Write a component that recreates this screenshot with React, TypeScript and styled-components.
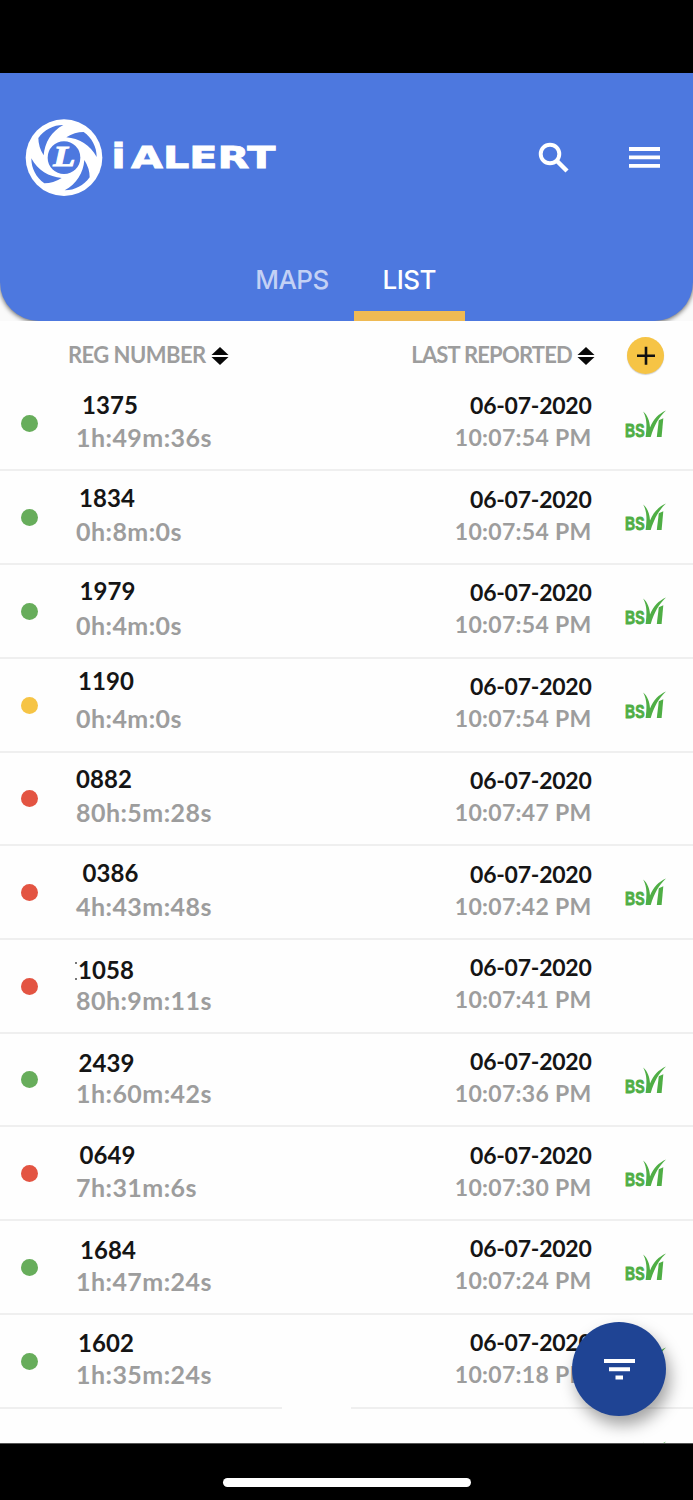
import React from 'react';
import styled, { createGlobalStyle } from 'styled-components';

const GlobalStyle = createGlobalStyle`
  body { margin: 0; background: #fefefe; }
  * { box-sizing: border-box; }
`;

const Screen = styled.div`
  position: relative;
  width: 693px;
  height: 1500px;
  overflow: hidden;
  display: flex;
  flex-direction: column;
  background: #fefefe;
  font-family: Lato, 'Liberation Sans', sans-serif;
`;

const StatusBar = styled.div`
  flex: none;
  height: 73px;
  background: #000;
`;

const HeaderWrap = styled.div`
  flex: none;
  height: 248px;
  background: #fafafa;
  overflow: hidden;
`;

const Header = styled.header`
  height: 248px;
  display: flex;
  flex-direction: column;
  justify-content: space-between;
  background: #4d78df;
  border-radius: 0 0 39px 39px;
  box-shadow: 0 1px 5px rgba(0, 0, 0, 0.65);
`;

const TopRow = styled.div`
  display: flex;
  align-items: center;
  height: 168px;
  padding: 2px 33px 0 22px;
`;

const Brand = styled.div`
  display: flex;
  align-items: center;
  flex: 1;
`;

const Actions = styled.div`
  display: flex;
  align-items: center;
  gap: 60px;
`;

const Tabs = styled.nav`
  display: flex;
  height: 80px;
  padding-left: 230px;
`;

const Tab = styled.div<{ $active?: boolean }>`
  width: ${p => (p.$active ? 110.5 : 124)}px;
  padding-top: 23px;
  text-align: center;
  font: 500 26px/32px Inter, sans-serif;
  letter-spacing: ${p => (p.$active ? '-0.5px' : '-0.5px')};
  color: ${p => (p.$active ? '#fff' : '#c3d1f5')};
  font-weight: ${p => (p.$active ? 500 : 450)};
  border-bottom: ${p => (p.$active ? '10px solid #efba54' : '0')};
`;

const ListHead = styled.div`
  flex: none;
  height: 56.7px;
  display: grid;
  grid-template-columns: 344px 251px 1fr;
  padding-top: 16px;
`;

const HeadCell = styled.div<{ $end?: boolean }>`
  display: flex;
  align-items: center;
  justify-content: ${p => (p.$end ? 'flex-end' : 'flex-start')};
  gap: 5px;
  height: 37px;
  padding-left: ${p => (p.$end ? 0 : 68)}px;
  font-size: 22px;
  letter-spacing: ${p => (p.$end ? '-0.8px' : '-0.55px')};
  font-weight: 700;
  color: #9d9d9d;
`;

const HeadLabel = styled.span`
  margin-top: -2px;
`;

const AddButton = styled.button`
  width: 37px;
  height: 37px;
  margin-left: 32px;
  padding: 0;
  border: 0;
  border-radius: 50%;
  background: #f6c445;
  box-shadow: 0 1px 1px rgba(0, 0, 0, 0.18);
`;

const List = styled.div`
  flex: 1;
  min-height: 0;
  overflow: hidden;
`;

const Row = styled.div<{ $broken?: boolean }>`
  height: 93.73px;
  display: grid;
  grid-template-columns: 76px 268px 247.5px 1fr;
  background: ${p =>
      p.$broken
        ? 'linear-gradient(90deg, #efefef 282px, transparent 282px, transparent 351px, #efefef 351px)'
        : 'linear-gradient(#efefef, #efefef)'}
    0 100% / 100% 2px no-repeat;
`;

const Dot = styled.span<{ $color: string }>`
  width: 17px;
  height: 17px;
  margin: 37.7px 0 0 21px;
  border-radius: 50%;
  background: ${p => p.$color};
`;

const Cell = styled.div<{ $end?: boolean }>`
  margin-top: ${p => (p.$end ? 11.3 : -1)}px;
  text-align: ${p => (p.$end ? 'right' : 'left')};
  font-weight: 700;
  font-size: 24px;
  line-height: 32px;
  white-space: nowrap;
`;

const Reg = styled.div<{ $x: number; $y: number }>`
  height: ${p => p.$y + 16}px;
  margin-bottom: ${p => 28.5 - p.$y}px;
  padding: ${p => p.$y - 16}px 0 0 ${p => p.$x}px;
  letter-spacing: 0.05px;
  color: #151515;
`;

const Speck = styled.i`
  display: inline-block;
  width: 2px;
  height: 18px;
  margin-right: 1px;
  margin-left: -2px;
  vertical-align: -1px;
  background: linear-gradient(#777 2px, transparent 2px, transparent 16px, #777 16px);
`;

const DateText = styled.div`
  font-size: 23px;
  letter-spacing: -0.25px;
  color: #151515;
`;

const RunTime = styled.div`
  font-size: 25px;
  letter-spacing: 0.45px;
  color: #9d9d9d;
`;

const ClockTime = styled.div`
  font-size: 23px;
  letter-spacing: 0.3px;
  color: #9d9d9d;
`;

const Badge = styled.div`
  padding: 32px 0 0 33px;
`;

const Fab = styled.button`
  position: absolute;
  left: 572px;
  top: 1322px;
  width: 94px;
  height: 94px;
  padding: 0;
  border: 0;
  border-radius: 50%;
  background: #1f4494;
  box-shadow: 4px 9px 16px rgba(0, 0, 0, 0.36);
`;

const HomeBar = styled.div`
  position: relative;
  flex: none;
  height: 57px;
  display: flex;
  justify-content: center;
  padding-top: 33.5px;
  background: #000;
  border-top: 1px solid #555;
`;

const HomeIndicator = styled.div`
  width: 248px;
  height: 9px;
  border-radius: 5px;
  background: #fff;
`;

const blade = 'M124 27 C93 27 67 41 49 66 Q49 93 65 118 C68 80 88 46 124 27Z';

const Logo = () => (
  <svg width="256" height="84" viewBox="0 0 256 84">
    <g transform="scale(.33333)">
      <circle cx="126" cy="125" r="115" fill="#fff" />
      {[0, 90, 180, 270].map(a => (
        <path key={a} d={blade} fill="#4d78df" transform={`rotate(${a} 126 125)`} />
      ))}
      <circle cx="126" cy="125" r="49" fill="#4d78df" />
      <text x="94" y="150" textLength="66" lengthAdjust="spacingAndGlyphs" fill="#fff" stroke="#fff" strokeWidth="3"
        fontFamily="Liberation Serif, serif" fontStyle="italic" fontWeight="700" fontSize="88">L</text>
    </g>
    <g fill="#fff" stroke="#fff" fontFamily="DejaVu Sans, sans-serif" fontWeight="700">
      <text x="89.5" y="52.3" fontSize="34" textLength="14" lengthAdjust="spacingAndGlyphs" strokeWidth="1">i</text>
      <text x="109" y="52.3" fontSize="30.5" textLength="144.5" lengthAdjust="spacingAndGlyphs" strokeWidth=".8">ALERT</text>
    </g>
  </svg>
);

const Sort = () => (
  <svg width="18" height="20" viewBox="0 0 18 20">
    <path d="M9 1 17.500 9H.5ZM9 19 17.500 11H.5Z" fill="#090909" />
  </svg>
);

const BsVi = ({ leafOnly = false }: { leafOnly?: boolean }) => (
  <svg width="42" height="34" viewBox="0 0 42 34" fill="#4fae45">
    {!leafOnly && (
      <text x="0" y="26.8" fontFamily="Liberation Sans, sans-serif" fontWeight="700" fontSize="18.2"
        textLength="19.5" lengthAdjust="spacingAndGlyphs" stroke="#4fae45" strokeWidth=".8">BS</text>
    )}
    <path d="M18.200 1.500C22.500 5 24.700 11 25 17.500C28.500 9 33.500 4 41 .6C34 7 29.500 15 25.700 27H20.600C21.800 18 22.400 9 18.200 1.500Z" />
    <path d="M33.800 10.200 38.300 8.300 36.600 27H31.800Z" />
  </svg>
);

const GREEN = '#67ad5b';
const AMBER = '#f6c445';
const RED = '#e35442';

type Vehicle = { reg: string; run: string; time: string; color: string; x: number; y: number; bs?: boolean; speck?: boolean };

const vehicles: Vehicle[] = [
  { reg: '1375', run: '1h:49m:36s', time: '10:07:54 PM', color: GREEN, x: 6, y: 28.3, bs: true },
  { reg: '1834', run: '0h:8m:0s', time: '10:07:54 PM', color: GREEN, x: 3, y: 27.5, bs: true },
  { reg: '1979', run: '0h:4m:0s', time: '10:07:54 PM', color: GREEN, x: 3.5, y: 26.8, bs: true },
  { reg: '1190', run: '0h:4m:0s', time: '10:07:54 PM', color: AMBER, x: 2, y: 23.3, bs: true },
  { reg: '0882', run: '80h:5m:28s', time: '10:07:47 PM', color: RED, x: 0, y: 27.3 },
  { reg: '0386', run: '4h:43m:48s', time: '10:07:42 PM', color: RED, x: 6.5, y: 27.6, bs: true },
  { reg: '1058', run: '80h:9m:11s', time: '10:07:41 PM', color: RED, x: 1, y: 31.2, speck: true },
  { reg: '2439', run: '1h:60m:42s', time: '10:07:36 PM', color: GREEN, x: 2.5, y: 30.4, bs: true },
  { reg: '0649', run: '7h:31m:6s', time: '10:07:30 PM', color: RED, x: 3.5, y: 28.3, bs: true },
  { reg: '1684', run: '1h:47m:24s', time: '10:07:24 PM', color: GREEN, x: 4, y: 29.5, bs: true },
  { reg: '1602', run: '1h:35m:24s', time: '10:07:18 PM', color: GREEN, x: 2, y: 29.3, bs: true },
];

export default function App() {
  return (
    <Screen>
      <GlobalStyle />
      <StatusBar />
      <HeaderWrap>
        <Header>
          <TopRow>
            <Brand><Logo /></Brand>
            <Actions>
              <svg width="31" height="32" viewBox="0 0 31 32" fill="none" stroke="#fff">
                <circle cx="12" cy="12" r="9.300" strokeWidth="3.900" />
                <path d="M18.500 18.500 29 29" strokeWidth="4.400" />
              </svg>
              <svg width="31" height="22" viewBox="0 0 31 22" fill="#fff">
                <path d="M0 0H31V3.900H0ZM0 8.500H31V12.300H0ZM0 17H31V20.800H0Z" />
              </svg>
            </Actions>
          </TopRow>
          <Tabs>
            <Tab>MAPS</Tab>
            <Tab $active>LIST</Tab>
          </Tabs>
        </Header>
      </HeaderWrap>
      <ListHead>
        <HeadCell><HeadLabel>REG NUMBER</HeadLabel><Sort /></HeadCell>
        <HeadCell $end><HeadLabel>LAST REPORTED</HeadLabel><Sort /></HeadCell>
        <AddButton>
          <svg width="37" height="37" viewBox="0 0 37 37">
            <path d="M10 18.800H28M19 9.800V27.800" stroke="#111" strokeWidth="2.600" />
          </svg>
        </AddButton>
      </ListHead>
      <List>
        {vehicles.map((v, i) => (
          <Row key={v.reg} $broken={i === vehicles.length - 1}>
            <Dot $color={v.color} />
            <Cell>
              <Reg $x={v.x} $y={v.y}>{v.speck && <Speck />}{v.reg}</Reg>
              <RunTime>{v.run}</RunTime>
            </Cell>
            <Cell $end>
              <DateText>06-07-2020</DateText>
              <ClockTime>{v.time}</ClockTime>
            </Cell>
            {v.bs && <Badge><BsVi /></Badge>}
          </Row>
        ))}
        <Row>
          <span /><span /><span />
          <Badge><BsVi leafOnly /></Badge>
        </Row>
      </List>
      <HomeBar><HomeIndicator /></HomeBar>
      <Fab>
        <svg width="94" height="94" viewBox="0 0 94 94" fill="#fff">
          <path d="M32 37H63V41H32ZM37 45.300H58V49.300H37ZM43.500 53.500H51V57.500H43.500Z" />
        </svg>
      </Fab>
    </Screen>
  );
}
